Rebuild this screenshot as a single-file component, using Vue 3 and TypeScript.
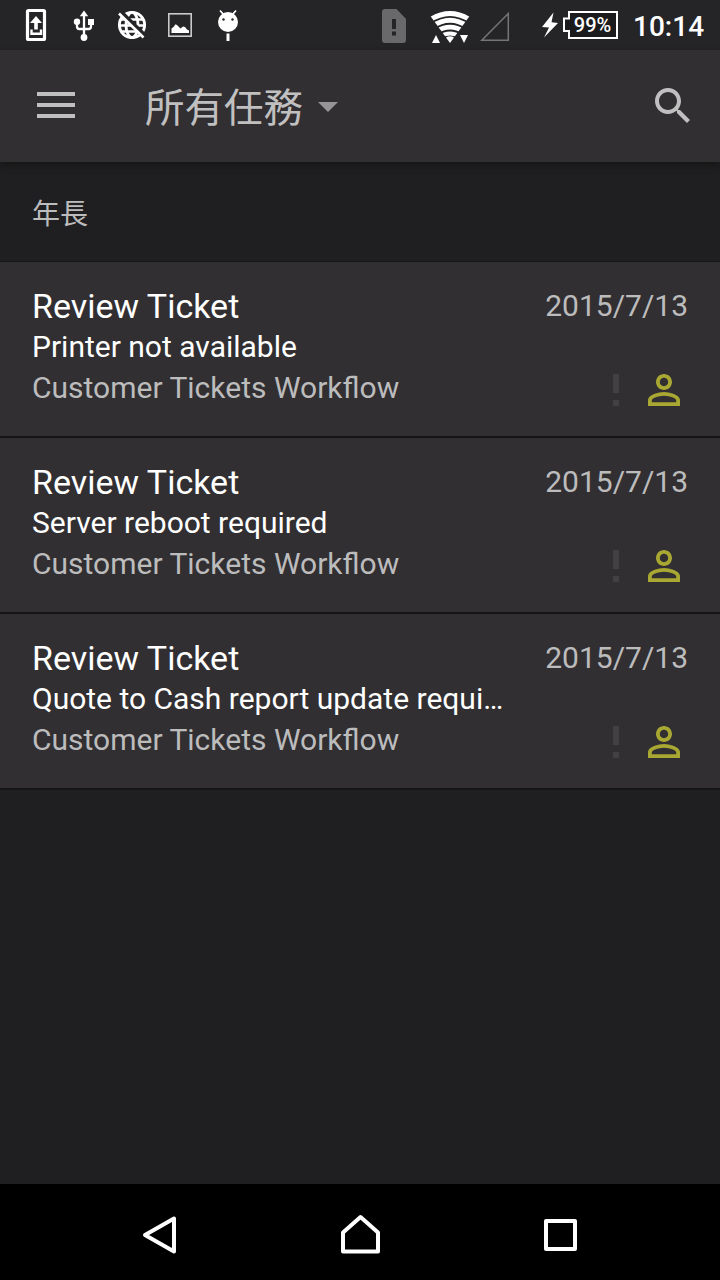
<script setup lang="ts">
interface Ticket {
  id: number
  title: string
  summary: string
  workflow: string
  date: string
}

const tickets: Ticket[] = [
  { id: 1, title: 'Review Ticket', summary: 'Printer not available', workflow: 'Customer Tickets Workflow', date: '2015/7/13' },
  { id: 2, title: 'Review Ticket', summary: 'Server reboot required', workflow: 'Customer Tickets Workflow', date: '2015/7/13' },
  { id: 3, title: 'Review Ticket', summary: 'Quote to Cash report update requi…', workflow: 'Customer Tickets Workflow', date: '2015/7/13' },
]
</script>

<template>
  <div class="screen">
    <header class="status">
      <div class="notifications">
        <svg width="48" height="50" viewBox="0 0 48 50">
          <rect x="15.500" y="10.500" width="17" height="29" rx="1" fill="none" stroke="#fff" stroke-width="3.200" />
          <path d="M24 16l6 7h-4.200v6.500h-3.600v-6.500h-4.200z" fill="#fff" />
          <path d="M19.500 29.500v4.300h9.500v-4.300" fill="none" stroke="#fff" stroke-width="2.400" />
        </svg>
        <svg width="48" height="50" viewBox="0 0 48 50">
          <path d="M24 14v24M17 22v4.500q0 2.500 2.500 2.500h9q2.500 0 2.500-2.500v-4.500" fill="none" stroke="#fff" stroke-width="2.300" />
          <path d="M24 10.500l4.200 5.800h-8.400z" fill="#fff" />
          <circle cx="17" cy="21.800" r="3.200" fill="#fff" />
          <rect x="28" y="19" width="6" height="6" fill="#fff" />
          <circle cx="24" cy="37.500" r="3.400" fill="#fff" />
        </svg>
        <svg width="48" height="50" viewBox="0 0 48 50">
          <g fill="none" stroke="#fff" stroke-width="2.900">
            <circle cx="24" cy="25" r="12.600" />
            <ellipse cx="24" cy="25" rx="6" ry="12.600" />
            <path d="M13 19.500h22M12 25.500h24M13 31.500h22" stroke-width="2.500" />
          </g>
          <path d="M12.500 11.500l25 24.500" stroke="#252527" stroke-width="4" />
          <path d="M11 13.500l24.500 24" stroke="#fff" stroke-width="2.600" />
        </svg>
        <svg width="48" height="50" viewBox="0 0 48 50">
          <rect x="12.800" y="13.800" width="22.400" height="22.400" fill="none" stroke="#c8cac9" stroke-width="1.600" />
          <path d="M15.500 33v-4.500l2-1.500 2-2.700 1.500.700 3.500 3.500 2.500-2 2 .500 2 2.500 2 1v2.500z" fill="#fff" />
        </svg>
        <svg width="48" height="50" viewBox="0 0 48 50">
          <circle cx="24" cy="22" r="10" fill="#fff" />
          <path d="M16 10.500l3.500 4M32 10.500l-3.500 4" stroke="#fff" stroke-width="1.800" />
          <circle cx="19.500" cy="19.500" r="1.200" fill="#252527" />
          <circle cx="28.500" cy="19.500" r="1.200" fill="#252527" />
          <path d="M24 33.500v7.500" stroke="#fff" stroke-width="3" />
        </svg>
      </div>
      <div class="system">
        <svg class="sim" width="24" height="50" viewBox="0 0 24 50">
          <path d="M3 9h11.500l9.500 10v21q0 3-3 3h-18q-3 0-3-3v-28q0-3 3-3z" fill="#69696b" />
          <path d="M10 19h4v10h-4zM10 31.500h4v4h-4z" fill="#252527" />
        </svg>
        <svg class="wifi" width="40" height="50" viewBox="0 0 40 50">
          <defs><clipPath id="fan"><path d="M20 43L-1 14V5H41V14z" /></clipPath></defs>
          <g clip-path="url(#fan)" fill="none" stroke="#fff" stroke-width="4.800">
            <path d="M-1 20.500Q20 6.500 41 20.500" />
            <path d="M2 26.500Q20 14 38 26.500" />
            <path d="M6 31.800Q20 22.500 34 31.800" />
            <path d="M9 37Q20 30 31 37" stroke-width="4" />
          </g>
          <path d="M16 37.500q4-2.500 8 0L20 43z" fill="#fff" />
          <path d="M6 35l4 8H2zM34 43l-4-8h8z" fill="#fff" />
        </svg>
        <svg class="signal" width="30" height="50" viewBox="0 0 30 50">
          <path d="M1.800 40.300L28.300 13.500v26.800z" fill="none" stroke="#757577" stroke-width="1.500" />
        </svg>
        <svg class="bolt" width="18" height="50" viewBox="0 0 18 50">
          <path d="M12.500 12.500L1 27l7 .500L3 37.500 17 23l-6.500-.700z" fill="#fff" />
        </svg>
        <div class="battery">
          <svg width="56" height="50" viewBox="0 0 56 50">
            <path d="M6 12h48v26h-48v-7h-5V18.500h5z" fill="#1b1b1d" stroke="#fff" stroke-width="2" />
          </svg>
          <span class="percent">99%</span>
        </div>
        <span class="clock">10:14</span>
      </div>
    </header>

    <nav class="toolbar">
      <svg class="menu" width="38" height="26" viewBox="0 0 38 26">
        <path d="M0 0h38v4H0zM0 11h38v4H0zM0 22h38v4H0z" fill="#c1c0c1" />
      </svg>
      <span class="heading">所有任務</span>
      <svg class="caret" width="20" height="10" viewBox="0 0 20 10"><path d="M0 0h20L10 10z" fill="#969597" /></svg>
      <svg class="search" width="48" height="48" viewBox="0 0 24 24">
        <path fill="#c1c0c1" d="M15.500 14h-.790l-.280-.270C15.410 12.590 16 11.110 16 9.500 16 5.910 13.090 3 9.500 3S3 5.910 3 9.500 5.910 16 9.500 16c1.610 0 3.090-.590 4.230-1.570l.270.280v.790l5 4.990L20.490 19l-4.990-5zm-6 0C7.010 14 5 11.990 5 9.500S7.010 5 9.500 5 14 7.010 14 9.500 11.990 14 9.500 14z" />
      </svg>
    </nav>

    <main class="content">
      <h2 class="group">年長</h2>
      <ul class="list">
        <li v-for="ticket in tickets" :key="ticket.id" class="row">
          <div class="info">
            <div class="title">{{ ticket.title }}</div>
            <div class="summary">{{ ticket.summary }}</div>
            <div class="workflow">{{ ticket.workflow }}</div>
          </div>
          <div class="meta">
            <div class="date">{{ ticket.date }}</div>
            <div class="flags">
              <svg width="48" height="48" viewBox="0 0 48 48"><path d="M21 8h6v19h-6zM21 34h6v6h-6z" fill="#414043" /></svg>
              <svg width="48" height="48" viewBox="0 0 24 24">
                <path fill="#a8a832" d="M12 5.900c1.160 0 2.100.940 2.100 2.100s-.940 2.100-2.100 2.100S9.900 9.160 9.900 8s.940-2.100 2.100-2.100m0 9c2.970 0 6.100 1.460 6.100 2.100v1.100H5.900V17c0-.640 3.130-2.100 6.100-2.100M12 4C9.790 4 8 5.790 8 8s1.790 4 4 4 4-1.790 4-4-1.790-4-4-4zm0 9c-2.670 0-8 1.340-8 4v3h16v-3c0-2.660-5.330-4-8-4z" />
              </svg>
            </div>
          </div>
        </li>
      </ul>
    </main>

    <footer class="navbar">
      <svg width="40" height="48" viewBox="0 0 40 48"><path d="M34 8.500v33L5 25z" /></svg>
      <svg width="40" height="48" viewBox="0 0 40 48"><path d="M3 41.500V22.500L20.500 7l17.500 15.500v19z" /></svg>
      <svg width="40" height="48" viewBox="0 0 40 48"><path d="M6 11h29v28H6z" /></svg>
    </footer>
  </div>
</template>

<style>
body {
  margin: 0;
  background: #1f1f21;
}
</style>

<style scoped>
.screen {
  width: 720px;
  height: 1280px;
  display: flex;
  flex-direction: column;
  overflow: hidden;
  background: #1f1f21;
  font-family: Roboto, "Noto Sans CJK TC", sans-serif;
  color: #fff;
}
svg {
  display: block;
  flex: none;
}
.status {
  height: 50px;
  flex: none;
  display: flex;
  justify-content: space-between;
  background: #252527;
}
.notifications {
  display: flex;
  margin-left: 12px;
}
.system {
  display: flex;
  align-items: flex-start;
  padding-right: 16px;
}
.wifi {
  margin-left: 24px;
}
.signal {
  margin-left: 10px;
}
.bolt {
  margin-left: 31px;
}
.battery {
  position: relative;
  margin-left: 4px;
}
.percent {
  position: absolute;
  left: 3px;
  right: 0;
  top: 0;
  text-align: center;
  font-size: 20px;
  line-height: 50px;
  font-weight: 500;
}
.clock {
  width: 71px;
  margin-left: 14px;
  text-align: right;
  white-space: nowrap;
  font-size: 28px;
  line-height: 54px;
  font-weight: 500;
}
.toolbar {
  position: relative;
  height: 112px;
  flex: none;
  display: flex;
  align-items: center;
  box-sizing: border-box;
  padding: 0 23px 2px 37px;
  background: #312f32;
  box-shadow: 0 3px 8px rgba(0, 0, 0, 0.35);
}
.heading {
  margin-left: 70px;
  width: 160px;
  padding-top: 8px;
  font-size: 39.500px;
  line-height: 56px;
  color: #c1c0c1;
}
.caret {
  margin: 3px 0 0 13px;
}
.search {
  margin: 2px 0 0 auto;
}
.content {
  flex: 1;
}
.group {
  margin: 0;
  height: 99px;
  padding-left: 32px;
  font-size: 28px;
  line-height: 105px;
  font-weight: 400;
  color: #bcbcbd;
}
.list {
  margin: 0;
  padding: 0;
  list-style: none;
  border-top: 1px solid #151416;
}
.row {
  display: flex;
  justify-content: space-between;
  box-sizing: border-box;
  height: 176px;
  padding: 24px 32px 0;
  background: #312f32;
  border-bottom: 2px solid #151416;
}
.info {
  width: 480px;
  white-space: nowrap;
}
.title {
  font-size: 34px;
  line-height: 40px;
}
.summary {
  font-size: 30px;
  line-height: 41px;
}
.workflow {
  font-size: 30px;
  line-height: 41px;
  color: #bcbcbd;
}
.meta {
  display: flex;
  flex-direction: column;
  align-items: flex-end;
}
.date {
  font-size: 30px;
  line-height: 40px;
  color: #bcbcbd;
}
.flags {
  display: flex;
  margin-top: 40px;
}
.navbar {
  height: 96px;
  flex: none;
  display: flex;
  justify-content: center;
  align-items: center;
  gap: 160px;
  box-sizing: border-box;
  padding-top: 4px;
  background: #000;
}
.navbar path {
  fill: none;
  stroke: #fff;
  stroke-width: 4;
  stroke-linejoin: round;
}
</style>
